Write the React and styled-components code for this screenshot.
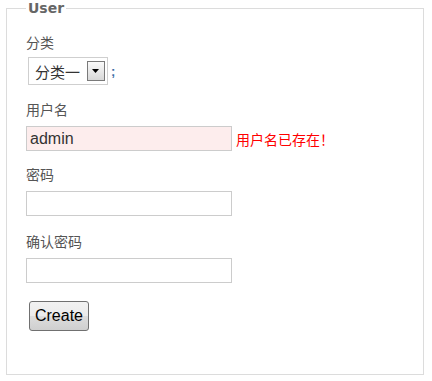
import React from "react";
import styled, { createGlobalStyle } from "styled-components";

const Global = createGlobalStyle`
  html, body { margin: 0; padding: 0; background: #fff; }
  body { font-family: "Liberation Sans", "Noto Sans CJK SC", sans-serif; }
`;

const Fieldset = styled.fieldset`
  margin: 0 6px 0 6px;
  width: 418px;
  height: 375px;
  box-sizing: border-box;
  border: 1px solid #dcdcdc;
  padding: 16px 0 0 19px;
`;

const Legend = styled.legend`
  font-family: "DejaVu Sans", "Liberation Sans", sans-serif;
  font-weight: bold;
  font-size: 14px;
  line-height: 16px;
  color: #666;
  padding: 0 2px;
`;

const Field = styled.div`
  display: flex;
  flex-direction: column;
  align-items: flex-start;
  margin-bottom: ${(p) => p.$mb || 0}px;
`;

const Label = styled.label`
  font-family: "Noto Sans CJK SC", sans-serif;
  font-size: 14px;
  line-height: 20px;
  color: #555;
  margin-bottom: ${(p) => p.$mb || 7}px;
`;

const SelectRow = styled.div`
  display: flex;
  align-items: center;
  padding-left: 2px;
`;

const FakeSelect = styled.div`
  display: flex;
  align-items: center;
  justify-content: space-between;
  box-sizing: border-box;
  width: 80px;
  height: 28px;
  border: 1px solid #cfcfcf;
  padding: 0 2px 0 6px;
  background: #fff;
  font-family: "Noto Sans CJK SC", sans-serif;
  font-size: 15px;
  color: #333;
`;

const ArrowBtn = styled.span`
  display: flex;
  align-items: center;
  justify-content: center;
  box-sizing: border-box;
  width: 18px;
  height: 20px;
  border: 1px solid #7a7a7a;
  background: linear-gradient(#fafafa, #d8d8d8);
`;

const Semi = styled.span`
  font-family: "Liberation Sans", sans-serif;
  font-size: 13px;
  font-weight: bold;
  color: #3b6ea5;
  margin-left: 3px;
`;

const InputRow = styled.div`
  display: flex;
  align-items: center;
`;

const Input = styled.input`
  box-sizing: border-box;
  width: 206px;
  height: 25px;
  border: 1px solid #cccccc;
  background: ${(p) => (p.$error ? "#fdeded" : "#fff")};
  font-family: "Liberation Sans", sans-serif;
  font-size: 16px;
  color: #333;
  padding: 0 3px;
  margin: 0;
  outline: none;
`;

const ErrorText = styled.span`
  font-family: "Noto Sans CJK SC", sans-serif;
  font-size: 14px;
  color: #f00;
  margin-left: 4px;
`;

const Button = styled.button`
  box-sizing: border-box;
  width: 60px;
  height: 30px;
  margin-left: 3px;
  border: 1px solid #707070;
  border-radius: 3px;
  background: linear-gradient(#f2f2f2 0%, #ebebeb 50%, #dddddd 51%, #cfcfcf 100%);
  font-family: "Liberation Sans", sans-serif;
  font-size: 16px;
  color: #000;
  padding: 0;
`;

export default function App() {
  return (
    <>
      <Global />
      <Fieldset>
        <Legend>User</Legend>
        <Field $mb={14}>
          <Label $mb={5}>分类</Label>
          <SelectRow>
            <FakeSelect>
              <span>分类一</span>
              <ArrowBtn>
                <svg width="8" height="5" viewBox="0 0 8 5">
                  <path d="M0 0h7L3.5 4z" fill="#000" />
                </svg>
              </ArrowBtn>
            </FakeSelect>
            <Semi>;</Semi>
          </SelectRow>
        </Field>
        <Field $mb={13}>
          <Label $mb={7}>用户名</Label>
          <InputRow>
            <Input $error defaultValue="admin" />
            <ErrorText>用户名已存在！</ErrorText>
          </InputRow>
        </Field>
        <Field $mb={15}>
          <Label>密码</Label>
          <Input type="password" />
        </Field>
        <Field $mb={18}>
          <Label>确认密码</Label>
          <Input type="password" />
        </Field>
        <Button>Create</Button>
      </Fieldset>
    </>
  );
}
